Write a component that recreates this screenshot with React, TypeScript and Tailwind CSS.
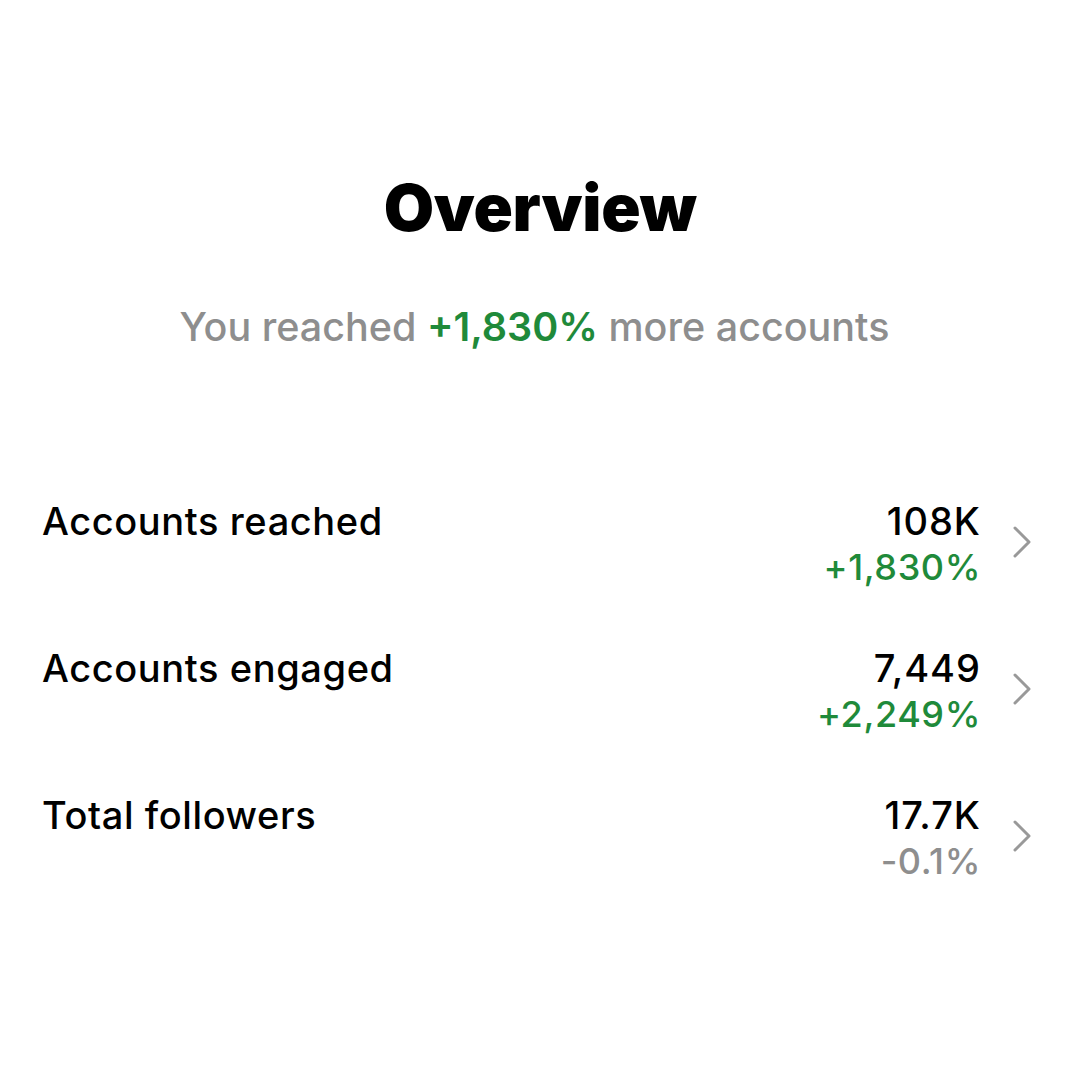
const rows = [
  { label: 'Accounts reached', value: '108K', change: '+1,830%', up: true },
  { label: 'Accounts engaged', value: '7,449', change: '+2,249%', up: true },
  { label: 'Total followers', value: '17.7K', change: '-0.1%', up: false },
]

function Chevron() {
  return (
    <svg width="20" height="32" viewBox="0 0 20 32" fill="none" className="mt-[28px]">
      <path d="M3 2 L17 16 L3 30" stroke="#999999" strokeWidth="3" strokeLinecap="round" strokeLinejoin="round" />
    </svg>
  )
}

export default function App() {
  return (
    <div className="w-[1080px] h-[1080px] bg-white font-['Inter',sans-serif] text-black flex flex-col">
      <h1 className="mt-[168px] text-center text-[65px] leading-[80px] font-black tracking-[-0.3px]">Overview</h1>
      <p className="mt-[55px] pr-[11px] text-center text-[39.5px] leading-[48px] text-[#8e8e8e] font-medium">
        You reached <span className="text-[#1f8a3a] font-semibold">+1,830%</span> more accounts
      </p>
      <div className="mt-[147px] flex flex-col gap-[55px] pl-[42px] pr-[48px]">
        {rows.map((r) => (
          <div key={r.label} className="flex flex-row">
            <div className="flex-1 text-[38px] leading-[46px] font-medium tracking-[0.6px]">{r.label}</div>
            <div className="flex flex-col items-end">
              <div className="text-[38px] leading-[46px] font-medium tracking-[1px]">{r.value}</div>
              <div className={`text-[36px] leading-[46px] font-medium tracking-[0.6px] ${r.up ? 'text-[#1f8a3a]' : 'text-[#8e8e8e]'}`}>{r.change}</div>
            </div>
            <div className="ml-[31px]">
              <Chevron />
            </div>
          </div>
        ))}
      </div>
    </div>
  )
}
